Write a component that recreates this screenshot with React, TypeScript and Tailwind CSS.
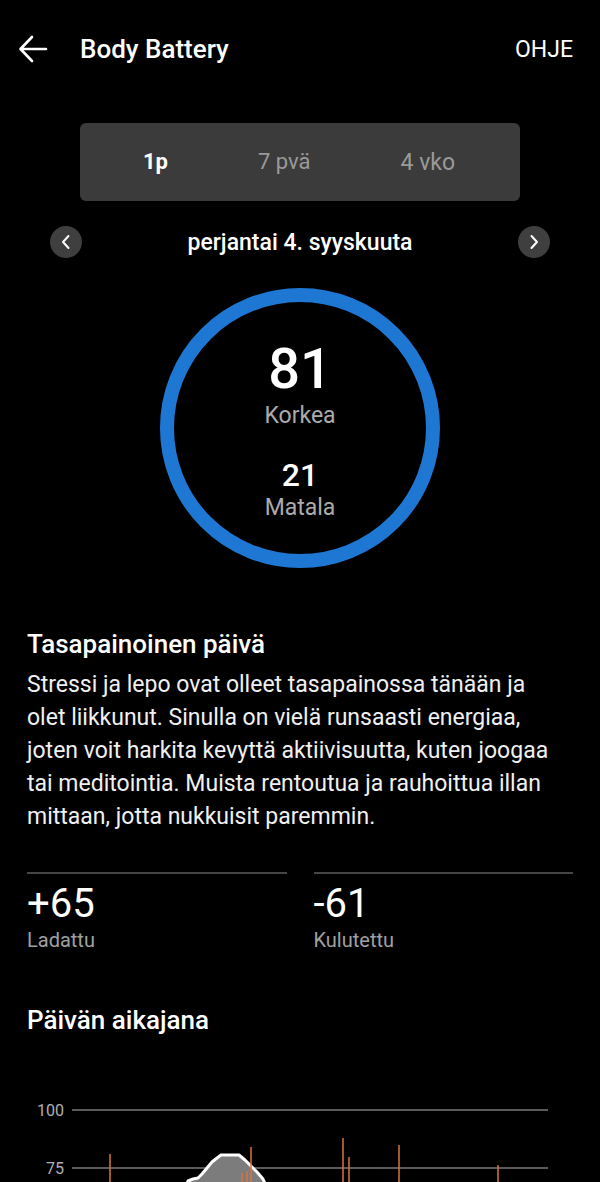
import React from 'react';

const PARAGRAPH = [
    'Stressi ja lepo ovat olleet tasapainossa tänään ja',
    'olet liikkunut. Sinulla on vielä runsaasti energiaa,',
    'joten voit harkita kevyttä aktiivisuutta, kuten joogaa',
    'tai meditointia. Muista rentoutua ja rauhoittua illan',
    'mittaan, jotta nukkuisit paremmin.',
];

// stress spikes: [x, top y] in page coords
const SPIKES: [number, number][] = [
    [110, 1154],
    [242, 1173],
    [247, 1171],
    [251, 1147],
    [343, 1138],
    [349, 1157],
    [399, 1145],
    [498, 1165],
];

function TimelineChart() {
    return (
        <svg width="600" height="200" viewBox="0 1090 600 200" className="block">
            <line x1="72" y1="1110" x2="548" y2="1110" stroke="#5a5a5a" strokeWidth="2" />
            <line x1="72" y1="1168" x2="548" y2="1168" stroke="#5a5a5a" strokeWidth="2" />
            <text x="64" y="1116" textAnchor="end" fill="#b0b0b0" fontSize="16" fontFamily="Roboto, sans-serif">100</text>
            <text x="64" y="1174" textAnchor="end" fill="#b0b0b0" fontSize="16" fontFamily="Roboto, sans-serif">75</text>
            <path
                d="M184,1190 L188,1181 L193,1179 L198,1178 L202,1174 L207,1168 L212,1162 L217,1158 L221,1155 L239,1155 L245,1160 L251,1166 L257,1172 L263,1179 L268,1190 Z"
                fill="#7c7c7c"
                stroke="#ffffff"
                strokeWidth="3"
                strokeLinejoin="round"
            />
            {SPIKES.map(([x, y]) => (
                <line key={x} x1={x} y1={y} x2={x} y2="1290" stroke="#d8743f" strokeWidth="1.5" />
            ))}
        </svg>
    );
}

export default function App() {
    return (
        <div className="w-[600px] min-h-[1182px] bg-black text-white font-['Roboto',sans-serif]">
            {/* Header */}
            <div className="h-[98px] flex items-center pl-[18px] pr-[27px]">
                <svg width="30" height="30" viewBox="0 0 30 30" className="shrink-0">
                    <path d="M3 15 H28 M14 3 L2.5 15 L14 27" fill="none" stroke="#fff" strokeWidth="2.6" strokeLinecap="round" strokeLinejoin="round" />
                </svg>
                <span className="ml-[32px] text-[26px] font-medium leading-none">Body Battery</span>
                <span className="ml-auto text-[23px] leading-none">OHJE</span>
            </div>

            {/* Range tabs */}
            <div className="mx-[80px] mt-[25px] h-[78px] rounded-[6px] bg-[#3b3b3b] flex items-center pl-[63px] gap-[90px] text-[22px] leading-none">
                <span className="font-bold text-white">1p</span>
                <span className="text-[#9a9a9a]">7 pvä</span>
                <span className="text-[#9a9a9a] text-[23px]">4 vko</span>
            </div>

            {/* Date row */}
            <div className="mt-[25px] h-[32px] px-[50px] flex items-center justify-between">
                <div className="w-[32px] h-[32px] rounded-full bg-[#3f3f3f] flex items-center justify-center">
                    <svg width="12" height="16" viewBox="0 0 12 16">
                        <path d="M8.5 2 L3 8 L8.5 14" fill="none" stroke="#fff" strokeWidth="2" strokeLinecap="round" strokeLinejoin="round" />
                    </svg>
                </div>
                <span className="text-[23px] font-medium leading-none">perjantai 4. syyskuuta</span>
                <div className="w-[32px] h-[32px] rounded-full bg-[#3f3f3f] flex items-center justify-center">
                    <svg width="12" height="16" viewBox="0 0 12 16">
                        <path d="M3.5 2 L9 8 L3.5 14" fill="none" stroke="#fff" strokeWidth="2" strokeLinecap="round" strokeLinejoin="round" />
                    </svg>
                </div>
            </div>

            {/* Ring */}
            <div className="mt-[30px] mx-auto w-[280px] h-[280px] rounded-full border-[14px] border-[#1f77d4] flex flex-col items-center pt-[39px]">
                <span className="text-[56px] leading-[56px] font-medium">81</span>
                <span className="mt-[7px] text-[23px] leading-[23px] text-[#ababab]">Korkea</span>
                <span className="mt-[32px] text-[32px] leading-[32px] font-medium">21</span>
                <span className="mt-[5px] text-[23px] leading-[23px] text-[#ababab]">Matala</span>
            </div>

            {/* Summary */}
            <div className="px-[27px]">
                <h2 className="mt-[63px] text-[26px] leading-[26px] font-medium">Tasapainoinen päivä</h2>
                <div className="mt-[11px] text-[23px] leading-[33px] text-[#f0f0f0]">
                    {PARAGRAPH.map((line) => (
                        <div key={line} className="whitespace-nowrap">{line}</div>
                    ))}
                </div>

                {/* Charged / drained */}
                <div className="mt-[39px] grid grid-cols-2 gap-[27px]">
                    <div className="border-t-2 border-[#454545]">
                        <div className="mt-[10px] text-[40px] leading-[40px]">+65</div>
                        <div className="mt-[6px] text-[20px] leading-[20px] text-[#a0a0a0]">Ladattu</div>
                    </div>
                    <div className="border-t-2 border-[#454545]">
                        <div className="mt-[10px] text-[40px] leading-[40px]">-61</div>
                        <div className="mt-[6px] text-[20px] leading-[20px] text-[#a0a0a0]">Kulutettu</div>
                    </div>
                </div>

                <h2 className="mt-[57px] text-[26px] leading-[26px] font-medium">Päivän aikajana</h2>
            </div>

            {/* Timeline */}
            <div className="mt-[57px]">
                <TimelineChart />
            </div>
        </div>
    );
}
